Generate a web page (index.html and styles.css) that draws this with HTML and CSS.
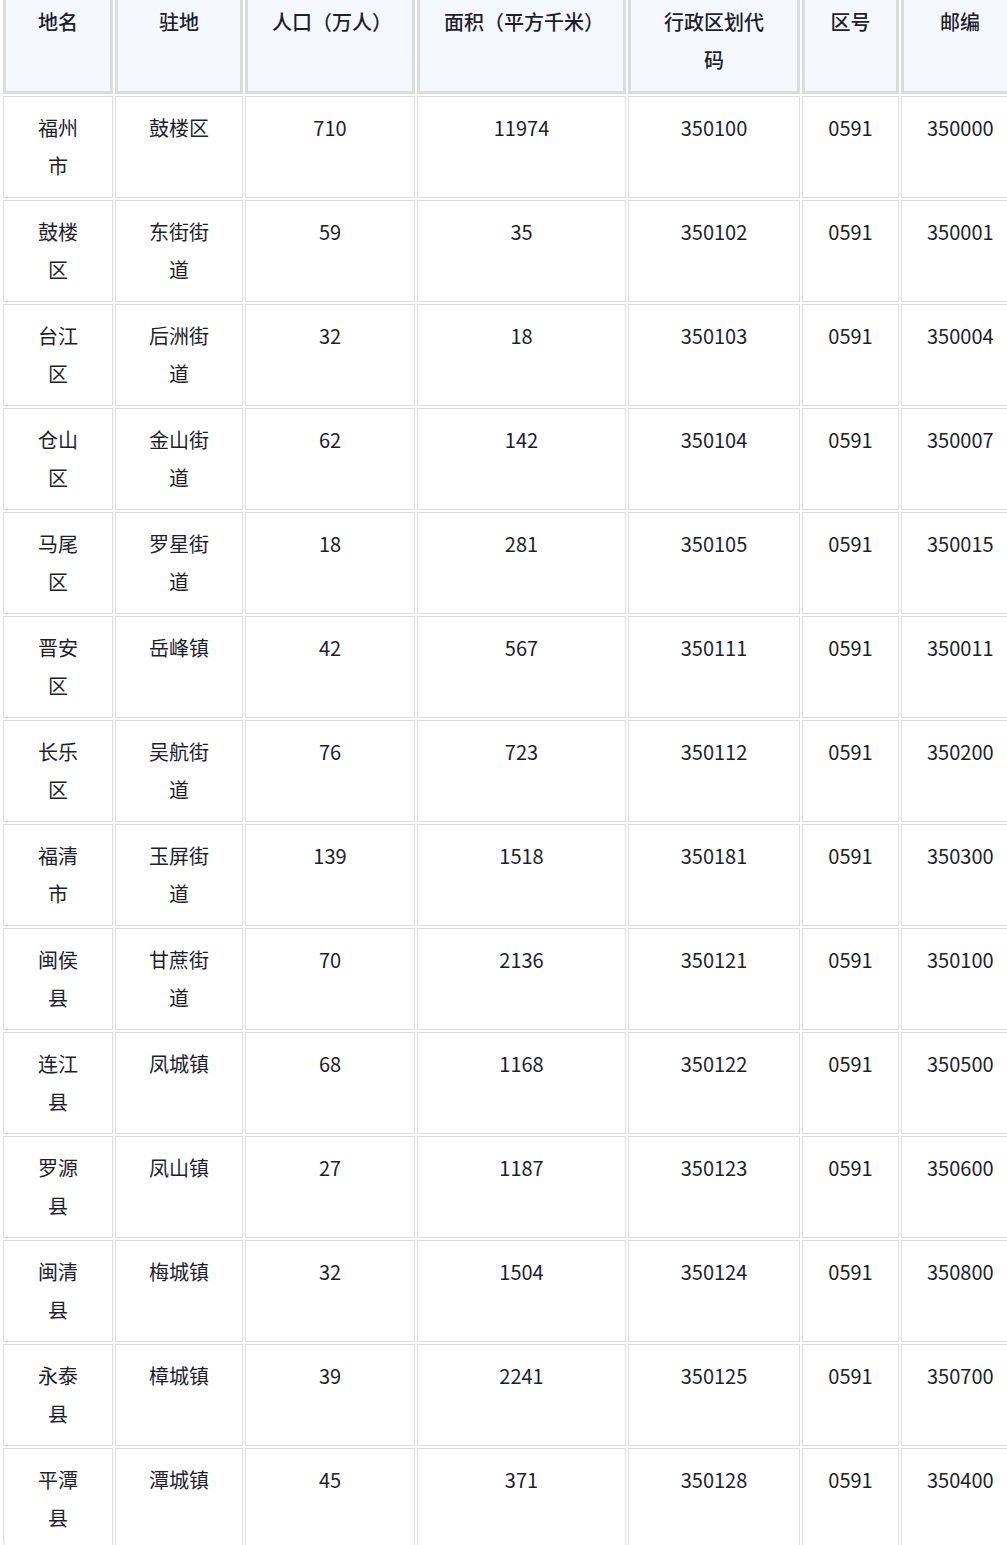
FILE: index.html
```html
<!DOCTYPE html>
<html lang="zh-CN">
<head>
<meta charset="utf-8">
<title>福州市行政区划</title>
<link rel="stylesheet" href="styles.css">
</head>
<body>
<div class="frame">
<table class="regions">
<colgroup>
<col class="c1"><col class="c2"><col class="c3"><col class="c4"><col class="c5"><col class="c6"><col class="c7">
</colgroup>
<thead>
<tr><th>地名</th><th>驻地</th><th>人口（万人）</th><th>面积（平方千米）</th><th>行政区划代码</th><th>区号</th><th>邮编</th></tr>
</thead>
<tbody>
<tr><td>福州市</td><td>鼓楼区</td><td>710</td><td>11974</td><td>350100</td><td>0591</td><td>350000</td></tr>
<tr><td>鼓楼区</td><td>东街街道</td><td>59</td><td>35</td><td>350102</td><td>0591</td><td>350001</td></tr>
<tr><td>台江区</td><td>后洲街道</td><td>32</td><td>18</td><td>350103</td><td>0591</td><td>350004</td></tr>
<tr><td>仓山区</td><td>金山街道</td><td>62</td><td>142</td><td>350104</td><td>0591</td><td>350007</td></tr>
<tr><td>马尾区</td><td>罗星街道</td><td>18</td><td>281</td><td>350105</td><td>0591</td><td>350015</td></tr>
<tr><td>晋安区</td><td>岳峰镇</td><td>42</td><td>567</td><td>350111</td><td>0591</td><td>350011</td></tr>
<tr><td>长乐区</td><td>吴航街道</td><td>76</td><td>723</td><td>350112</td><td>0591</td><td>350200</td></tr>
<tr><td>福清市</td><td>玉屏街道</td><td>139</td><td>1518</td><td>350181</td><td>0591</td><td>350300</td></tr>
<tr><td>闽侯县</td><td>甘蔗街道</td><td>70</td><td>2136</td><td>350121</td><td>0591</td><td>350100</td></tr>
<tr><td>连江县</td><td>凤城镇</td><td>68</td><td>1168</td><td>350122</td><td>0591</td><td>350500</td></tr>
<tr><td>罗源县</td><td>凤山镇</td><td>27</td><td>1187</td><td>350123</td><td>0591</td><td>350600</td></tr>
<tr><td>闽清县</td><td>梅城镇</td><td>32</td><td>1504</td><td>350124</td><td>0591</td><td>350800</td></tr>
<tr><td>永泰县</td><td>樟城镇</td><td>39</td><td>2241</td><td>350125</td><td>0591</td><td>350700</td></tr>
<tr><td>平潭县</td><td>潭城镇</td><td>45</td><td>371</td><td>350128</td><td>0591</td><td>350400</td></tr>
</tbody>
</table>
</div>
</body>
</html>
```
FILE: styles.css
```css
html, body {
  margin: 0;
  padding: 0;
  background: #ffffff;
}

.frame {
  width: 1007px;
  height: 1545px;
  overflow: hidden;
  padding-left: 1px;
  box-sizing: border-box;
}

.regions {
  margin-top: -14px;
  width: 1020px;
  table-layout: fixed;
  border-collapse: separate;
  border-spacing: 2px;
  font-family: "Noto Sans CJK SC", "Noto Sans", sans-serif;
  font-size: 20px;
  line-height: 38px;
  color: #1e1e2e;
}

.c1 { width: 110px; }
.c2 { width: 128px; }
.c3 { width: 170px; }
.c4 { width: 209px; }
.c5 { width: 172px; }
.c6 { width: 97px; }
.c7 { width: 118px; }

.regions th,
.regions td {
  box-sizing: border-box;
  text-align: center;
  vertical-align: top;
}

.regions th {
  padding: 12px 24px;
  border: 3px solid #dcdcdc;
  background: #f5f8ff;
  font-weight: 500;
}

.regions td {
  padding: 12px 25px;
  border: 1px solid #dddddd;
  background: #ffffff;
  font-weight: 400;
}

.regions tbody tr:last-child td:first-child {
  border-bottom-left-radius: 10px;
}
```
